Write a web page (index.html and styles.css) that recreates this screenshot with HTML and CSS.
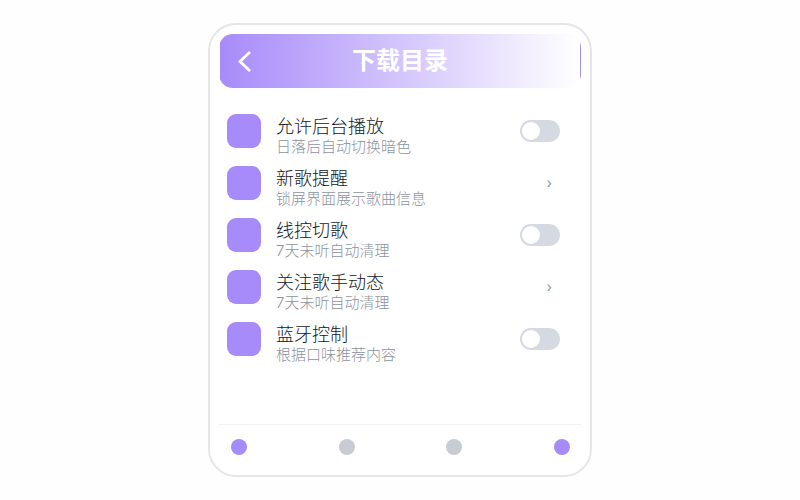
FILE: index.html
```
<!DOCTYPE html>
<html lang="zh-CN">
    <head>
        <meta charset="utf-8">
        <meta name="viewport" content="width=device-width, initial-scale=1">
        <title>下载目录</title>
        <link rel="stylesheet" href="styles.css">
    </head>
    <body>
        <main class="card">
            <header class="header">
                <button class="back" type="button" aria-label="返回">
                    <svg width="24" height="24" viewBox="0 0 24 24" fill="none" stroke="currentColor" stroke-width="2.8">
                        <path d="M18 3 L8 12.5 L18 22" />
                    </svg>
                </button>
                <h1 class="title">下载目录</h1>
            </header>
            <ul class="list">
                <li class="row">
                    <span class="icon"></span>
                    <label class="text" for="background-play">
                        <span class="name">允许后台播放</span>
                        <span class="desc">日落后自动切换暗色</span>
                    </label>
                    <span class="control"><input class="switch" type="checkbox" id="background-play"></span>
                </li>
                <li class="row">
                    <span class="icon"></span>
                    <a class="text" id="new-songs" href="#new-songs">
                        <span class="name">新歌提醒</span>
                        <span class="desc">锁屏界面展示歌曲信息</span>
                    </a>
                    <span class="control arrow">›</span>
                </li>
                <li class="row">
                    <span class="icon"></span>
                    <label class="text" for="wire-control">
                        <span class="name">线控切歌</span>
                        <span class="desc">7天未听自动清理</span>
                    </label>
                    <span class="control"><input class="switch" type="checkbox" id="wire-control"></span>
                </li>
                <li class="row">
                    <span class="icon"></span>
                    <a class="text" id="singer-news" href="#singer-news">
                        <span class="name">关注歌手动态</span>
                        <span class="desc">7天未听自动清理</span>
                    </a>
                    <span class="control arrow">›</span>
                </li>
                <li class="row">
                    <span class="icon"></span>
                    <label class="text" for="bluetooth">
                        <span class="name">蓝牙控制</span>
                        <span class="desc">根据口味推荐内容</span>
                    </label>
                    <span class="control"><input class="switch" type="checkbox" id="bluetooth"></span>
                </li>
            </ul>
            <nav class="tabs">
                <button class="tab active" type="button" aria-label="1"></button>
                <button class="tab" type="button" aria-label="2"></button>
                <button class="tab" type="button" aria-label="3"></button>
                <button class="tab active" type="button" aria-label="4"></button>
            </nav>
        </main>
    </body>
</html>
```
FILE: styles.css
```
* {
    box-sizing: border-box;
}
body {
    margin: 0;
    min-height: 100vh;
    display: flex;
    align-items: center;
    justify-content: center;
    background-color: #fefefe;
    color: #111827;
    font-family: Inter, "Noto Sans CJK SC", sans-serif;
}
.card {
    width: 100%;
    max-width: 384px;
    min-height: 454px;
    padding: 9px;
    display: flex;
    flex-direction: column;
    background-color: #fff;
    border: 2px solid #e5e5ea;
    border-radius: 28px;
}

/* the gradient repeats under the transparent border */
.header {
    height: 54px;
    padding: 0 12px;
    display: grid;
    grid-template-columns: 24px 1fr 24px;
    align-items: center;
    border: 1px solid transparent;
    border-radius: 14px;
    background-image: linear-gradient(90deg, #a78bfa, #fff);
    color: #fff;
}
.back {
    width: 24px;
    height: 24px;
    padding: 0;
    border: 0;
    background: none;
    color: inherit;
}
.back svg {
    display: block;
}
.title {
    margin: 0;
    font-size: 24px;
    line-height: 32px;
    font-weight: 700;
    text-align: center;
}

.list {
    list-style: none;
    margin: 0;
    padding: 26px 21px 26px 8px;
    flex: 1;
    display: flex;
    flex-direction: column;
    gap: 12px;
}
.row {
    display: flex;
    align-items: flex-start;
    gap: 15px;
}
.icon {
    width: 34px;
    height: 34px;
    border-radius: 9px;
    background-color: #a78bfa;
}
.text {
    flex: 1;
    display: flex;
    flex-direction: column;
    color: inherit;
    text-decoration: none;
    font-weight: 300;
}
.name {
    font-size: 18px;
    line-height: 26px;
}
.desc {
    font-size: 15px;
    line-height: 14px;
    color: #8b93a1;
}
.control {
    height: 34px;
    display: flex;
    align-items: center;
}
.arrow {
    padding-right: 8px;
    font-size: 14px;
    line-height: 34px;
    color: #8b93a1;
}
.switch {
    appearance: none;
    width: 40px;
    height: 22px;
    margin: 0;
    padding: 2px;
    display: flex;
    border-radius: 11px;
    background-color: #d5d9e1;
}
.switch::before {
    content: "";
    width: 18px;
    height: 18px;
    border-radius: 50%;
    background-color: #fff;
}
.switch:checked {
    justify-content: flex-end;
    background-color: #a78bfa;
}

.tabs {
    padding: 14px 11px 11px 12px;
    display: flex;
    justify-content: space-between;
    border-top: 1px solid #f1f1f4;
}
.tab {
    width: 16px;
    height: 16px;
    padding: 0;
    border: 0;
    border-radius: 50%;
    background-color: #c7ccd3;
}
.tab.active {
    background-color: #a78bfa;
}
```
